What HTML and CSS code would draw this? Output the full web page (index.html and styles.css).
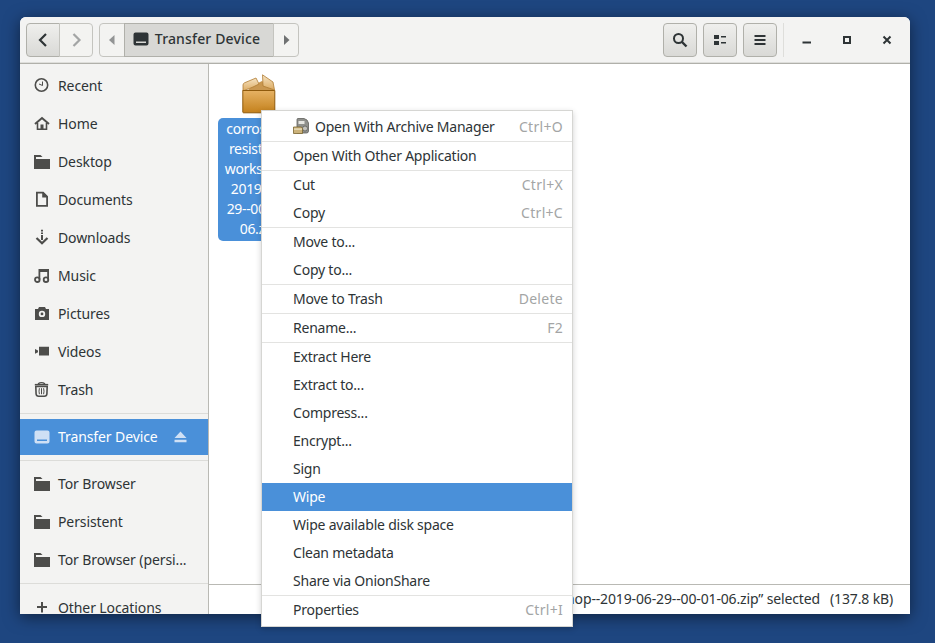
FILE: index.html
```html
<!DOCTYPE html>
<html lang="en">
<head>
  <meta charset="UTF-8">
  <title>Transfer Device</title>
  <link rel="stylesheet" href="styles.css">
</head>
<body>
  <main class="window">
    <header class="toolbar">
      <div class="linked">
        <button class="btn raised nav"><svg width="16" height="16" viewBox="0 0 16 16"><path d="M11 2 5 8l6 6" fill="none" stroke="#2e3436" stroke-width="2.200"/></svg></button>
        <button class="btn nav"><svg width="16" height="16" viewBox="0 0 16 16"><path d="m5.500 2 6 6-6 6" fill="none" stroke="#a3a5a5" stroke-width="2.200"/></svg></button>
      </div>
      <div class="linked pathbar">
        <button class="btn arrow"><svg width="8" height="12" viewBox="0 0 8 12"><path d="M6.500 1v10L1 6z" fill="#929494"/></svg></button>
        <button class="btn crumb">
          <svg width="16" height="16" viewBox="0 0 16 16"><path d="M2.500 1.500h11a2 2 0 0 1 2 2v9a2 2 0 0 1-2 2h-11a2 2 0 0 1-2-2v-9a2 2 0 0 1 2-2zM3 10.500V12h10v-1.500z" fill="#2e3436" fill-rule="evenodd"/></svg>
          Transfer Device
        </button>
        <button class="btn arrow"><svg width="8" height="12" viewBox="0 0 8 12"><path d="M2 1v10l5.500-5z" fill="#6f7172"/></svg></button>
      </div>
      <div class="spacer"></div>
      <button class="btn raised tool"><svg width="16" height="16" viewBox="0 0 16 16"><circle cx="6.500" cy="6.500" r="4.500" fill="none" stroke="#2e3436" stroke-width="2"/><path d="m10 10 4.500 4.500" stroke="#2e3436" stroke-width="2.400"/></svg></button>
      <button class="btn raised tool"><svg width="14" height="12" viewBox="0 0 14 12"><path d="M1 1h5v4H1zM1 7h5v4H1zM8 2h5v1.500H8zM8 8h5v1.500H8z" fill="#2e3436"/></svg></button>
      <button class="btn raised tool"><svg width="12" height="12" viewBox="0 0 12 12"><path d="M.5 1h11v2H.5zM.5 5h11v2H.5zM.5 9h11v2H.5z" fill="#2e3436"/></svg></button>
      <div class="divider"></div>
      <div class="winctl"><svg width="10" height="10" viewBox="0 0 10 10"><path d="M.5 6.500h8.500v2H.5z" fill="#2e3436"/></svg></div>
      <div class="winctl"><svg width="10" height="10" viewBox="0 0 10 10"><path d="M1 1h8v8H1zM3 3v4h4V3z" fill="#2e3436" fill-rule="evenodd"/></svg></div>
      <div class="winctl"><svg width="10" height="10" viewBox="0 0 10 10"><path d="m1.500 1.500 7 7M8.500 1.500l-7 7" stroke="#2e3436" stroke-width="2"/></svg></div>
    </header>

    <div class="body">
      <nav class="sidebar">
        <a class="place"><svg viewBox="0 0 16 16"><circle cx="7.500" cy="8" r="6.200" fill="none" stroke="#4d4d4b" stroke-width="1.600"/><path d="M8.500 4.500v4L5 7" fill="none" stroke="#4d4d4b"/></svg>Recent</a>
        <a class="place"><svg viewBox="0 0 16 16"><path d="M1 9 8 3l7 6" fill="none" stroke="#4d4d4b" stroke-width="2"/><path d="M3.500 8v6.200h9V8" fill="none" stroke="#4d4d4b" stroke-width="1.600"/><path d="M6.500 9.500h3v5h-3z" fill="#4d4d4b"/></svg>Home</a>
        <a class="place"><svg viewBox="0 0 16 16"><path d="M0 2h6.500l2 2H2v2h14v10.500H0z" fill="#4d4d4b"/></svg>Desktop</a>
        <a class="place"><svg viewBox="0 0 16 16"><path d="M2 .7h7.500L14 5.200v10.500H2zM3.800 2.500v11.400h8.400V6.500h-4v-4z" fill="#4d4d4b" fill-rule="evenodd"/></svg>Documents</a>
        <a class="place"><svg viewBox="0 0 16 16"><path d="M7 .7h2v1.800H7zM7 3.500h2V5H7zM7 6h2v5H7z" fill="#4d4d4b"/><path d="m2.500 9 5.500 5.300L13.500 9" fill="none" stroke="#4d4d4b" stroke-width="2.200"/></svg>Downloads</a>
        <a class="place"><svg viewBox="0 0 16 16"><path d="M4.500 2H15v10.500h-1.800V5H6.300v7.500H4.500z" fill="#4d4d4b"/><circle cx="3.300" cy="12.700" r="2.300" fill="none" stroke="#4d4d4b" stroke-width="1.800"/><circle cx="12" cy="12.700" r="2.300" fill="none" stroke="#4d4d4b" stroke-width="1.800"/></svg>Music</a>
        <a class="place"><svg viewBox="0 0 16 16"><path d="M5 2h6l1 2h3v11H1V4h3zM8 5.700a3.200 3.200 0 1 0 0 6.400 3.200 3.200 0 0 0 0-6.400zM8 7.500a1.400 1.400 0 1 1 0 2.800 1.400 1.400 0 0 1 0-2.800z" fill="#4d4d4b" fill-rule="evenodd"/></svg>Pictures</a>
        <a class="place"><svg viewBox="0 0 16 16"><path d="M5 3.700h10v8.800H5zM1 6l3 1.500v1.800L1 10.800z" fill="#4d4d4b"/></svg>Videos</a>
        <a class="place"><svg viewBox="0 0 16 16"><path d="M.8 3.700h13.400" fill="none" stroke="#4d4d4b" stroke-width="1.600"/><path d="M4 2.800Q7.500.4 11 2.800" fill="none" stroke="#4d4d4b" stroke-width="1.400"/><path d="M1.800 5.500h11.400l-.3 7.500q-.2 2.200-2.500 2.200H4.600q-2.300 0-2.500-2.200z" fill="none" stroke="#4d4d4b" stroke-width="1.600"/><path d="M7.500 7.200v6M5.400 7.200q-.8 3 0 6M9.600 7.200q.8 3 0 6" fill="none" stroke="#4d4d4b"/></svg>Trash</a>
        <hr class="rule rule-top">
        <a class="place current"><svg viewBox="0 0 16 16"><path d="M2.500 1.500h11a2 2 0 0 1 2 2v9a2 2 0 0 1-2 2h-11a2 2 0 0 1-2-2v-9a2 2 0 0 1 2-2zM3 10.500V12h10v-1.500z" fill="#cfe0f5" fill-rule="evenodd"/></svg>Transfer Device<svg class="eject" viewBox="0 0 13 12"><path d="M6.500 .5 12.500 7H.5zM.5 8.800h12v2.500H.5z" fill="#cfe0f5"/></svg></a>
        <hr class="rule rule-bottom">
        <a class="place"><svg viewBox="0 0 16 16"><path d="M0 2h6.500l2 2H2v2h14v10.500H0z" fill="#4d4d4b"/></svg>Tor Browser</a>
        <a class="place"><svg viewBox="0 0 16 16"><path d="M0 2h6.500l2 2H2v2h14v10.500H0z" fill="#4d4d4b"/></svg>Persistent</a>
        <a class="place"><svg viewBox="0 0 16 16"><path d="M0 2h6.500l2 2H2v2h14v10.500H0z" fill="#4d4d4b"/></svg>Tor Browser (persi...</a>
        <hr class="rule rule-last">
        <a class="place"><svg viewBox="0 0 16 16"><path d="M7 3h2v4h4v2H9v4.500H7V9H3V7h4z" fill="#4d4d4b"/></svg>Other Locations</a>
      </nav>

      <section class="files">
        <div class="grid">
          <div class="file">
            <svg class="box" width="34" height="40" viewBox="0 0 34 40">
              <defs>
                <linearGradient id="boxface" x1="0" y1="0" x2="0" y2="1"><stop offset="0" stop-color="#e6b264"/><stop offset="1" stop-color="#c4811c"/></linearGradient>
                <linearGradient id="boxlid" x1="0" y1="0" x2="0" y2="1"><stop offset="0" stop-color="#f6e3c2"/><stop offset="1" stop-color="#dcab62"/></linearGradient>
              </defs>
              <path d="M12 11 20 7l12 9H6z" fill="#c99750"/>
              <path d="M1 17V11q0-1.500 1.500-2.200L14 4l3 6-6 3-10 4z" fill="url(#boxlid)" stroke="#b07c34" stroke-width=".8"/>
              <path d="M20.500 .8 31 8l1.500 8-11.500-4z" fill="url(#boxlid)" stroke="#b07c34" stroke-width=".8"/>
              <path d="M.8 16.500h32v21.500a.8.8 0 0 1-.8.8H1.600a.8.8 0 0 1-.8-.8z" fill="url(#boxface)" stroke="#8f5a0c"/>
            </svg>
            <div class="file-name">corrosion-<br>resistant-<br>workshop-<br>2019-06-<br>29--00-01-<br>06.zip</div>
          </div>
        </div>
        <footer class="status">
          <span>“corrosion-resistant-workshop--2019-06-29--00-01-06.zip” selected</span>
          <span>(137.8 kB)</span>
        </footer>
      </section>
    </div>
  </main>

  <ul class="menu">
    <li class="item"><span class="item-label"><svg width="16" height="16" viewBox="0 0 16 16"><path d="M4 1.500q0-1 1-1h6l3 1.500 1.500 3v8q0 2-2 2H4z" fill="#8f908c" stroke="#5f605c" stroke-width=".8"/><path d="M5.500 3h6v3h-6z" fill="#e6e6e2"/><circle cx="12" cy="10.500" r="2.500" fill="#c2c2bd" stroke="#5f605c" stroke-width=".8"/><path d="M.5 9h8l1 1.500v5H.5z" fill="#cbb27a" stroke="#7a6430" stroke-width=".8"/><path d="M1 10.500h8v1.200H1z" fill="#eee5c8"/></svg>Open With Archive Manager</span><kbd>Ctrl+O</kbd></li>
    <li class="sep"></li>
    <li class="item"><span class="item-label">Open With Other Application</span></li>
    <li class="sep"></li>
    <li class="item"><span class="item-label">Cut</span><kbd>Ctrl+X</kbd></li>
    <li class="item"><span class="item-label">Copy</span><kbd>Ctrl+C</kbd></li>
    <li class="sep"></li>
    <li class="item"><span class="item-label">Move to...</span></li>
    <li class="item"><span class="item-label">Copy to...</span></li>
    <li class="sep"></li>
    <li class="item"><span class="item-label">Move to Trash</span><kbd>Delete</kbd></li>
    <li class="sep"></li>
    <li class="item"><span class="item-label">Rename...</span><kbd>F2</kbd></li>
    <li class="sep"></li>
    <li class="item"><span class="item-label">Extract Here</span></li>
    <li class="item"><span class="item-label">Extract to...</span></li>
    <li class="item"><span class="item-label">Compress...</span></li>
    <li class="item"><span class="item-label">Encrypt...</span></li>
    <li class="item"><span class="item-label">Sign</span></li>
    <li class="item active"><span class="item-label">Wipe</span></li>
    <li class="item"><span class="item-label">Wipe available disk space</span></li>
    <li class="item"><span class="item-label">Clean metadata</span></li>
    <li class="item"><span class="item-label">Share via OnionShare</span></li>
    <li class="sep"></li>
    <li class="item"><span class="item-label">Properties</span><kbd>Ctrl+I</kbd></li>
  </ul>
</body>
</html>
```

FILE: styles.css
```css
* {
  box-sizing: border-box;
}

body {
  margin: 0;
  height: 643px;
  overflow: hidden;
  position: relative;
  background: #1e4680;
  font-family: "Noto Sans", sans-serif;
  font-size: 14px;
  letter-spacing: -.1px;
  color: #2e3436;
}

.window {
  position: absolute;
  left: 20px;
  top: 17px;
  width: 890px;
  height: 597px;
  display: flex;
  flex-direction: column;
  overflow: hidden;
  border-radius: 6px 6px 0 0;
  background: #fff;
}

body::before {
  content: '';
  position: absolute;
  left: 20px;
  top: 17px;
  width: 890px;
  height: 597px;
  border-radius: 6px 6px 0 0;
  box-shadow: 0 3px 16px rgba(0, 0, 0, .5);
}

/* toolbar */
.toolbar {
  flex: none;
  height: 47px;
  display: flex;
  align-items: center;
  gap: 7px;
  padding: 0 3px 1px 6px;
  background: #f3f3f2;
  border-bottom: 1px solid #b0b0aa;
  box-shadow: inset 0 -1px 0 #dededb;
}

.btn {
  height: 34px;
  display: flex;
  align-items: center;
  justify-content: center;
  gap: 6px;
  padding: 0;
  font: inherit;
  letter-spacing: inherit;
  color: #2e3436;
  background: #f3f3f1;
  border: 1px solid #c4c4bf;
  border-radius: 4px;
}

.btn.raised {
  background: linear-gradient(#efefed, #d9d9d6);
  border-color: #b0b0aa;
}

.linked {
  display: flex;
}

.linked .btn {
  border-radius: 0;
  margin-left: -1px;
}

.linked .btn:first-child {
  border-radius: 4px 0 0 4px;
  margin-left: 0;
}

.linked .btn:last-child {
  border-radius: 0 4px 4px 0;
}

.pathbar {
  margin-left: -1px;
}

.nav {
  width: 34px;
}

.arrow {
  width: 26px;
}

.crumb {
  width: 150px;
  padding: 0 5px 2px 0;
  background: #d8d8d5;
  border-color: #b0b0aa;
  font-weight: 500;
  letter-spacing: .15px;
}

.spacer {
  flex: 1;
}

.tool {
  width: 34px;
  margin-left: -1px;
}

.divider {
  width: 1px;
  height: 34px;
  margin-left: -1px;
  margin-right: -4px;
  background: #dededb;
}

.winctl {
  width: 40px;
  display: flex;
  justify-content: center;
  margin-right: -7px;
}

.winctl:last-child {
  margin-right: 0;
}

/* main area */
.body {
  flex: 1;
  min-height: 0;
  display: flex;
}

.sidebar {
  flex: none;
  width: 189px;
  padding-top: 2px;
  background: #f3f3f2;
  border-right: 1px solid #b9b9b4;
}

.place {
  height: 38px;
  display: flex;
  align-items: center;
  gap: 8px;
  padding-left: 14px;
  color: #2e3436;
}

.place svg {
  width: 16px;
  height: 16px;
  flex: none;
}

.place.current {
  height: 36px;
  padding-bottom: 1px;
  background: #4a90d9;
  color: #fff;
}

.place .eject {
  width: 13px;
  height: 12px;
  margin-left: 8px;
}

.rule {
  height: 1px;
  margin: 0;
  border: 0;
  background: #dcdcd9;
}

.rule-top {
  margin: 5px 0;
}

.rule-bottom {
  margin: 5px 0 3px;
}

.rule-last {
  margin: 5px 0 4px;
}

.files {
  flex: 1;
  min-width: 0;
  display: flex;
  flex-direction: column;
}

.grid {
  flex: 1;
  padding: 10px 0 0 9px;
}

.file {
  width: 82px;
  display: flex;
  flex-direction: column;
  align-items: center;
  gap: 4px;
}

.box {
  display: block;
}

.file-name {
  width: 100%;
  padding: 1px 2px 2px 0;
  background: #4a90d9;
  color: #fff;
  text-align: center;
  line-height: 20px;
  letter-spacing: -.35px;
  border-radius: 5px;
}

.status {
  flex: none;
  height: 30px;
  display: flex;
  align-items: center;
  justify-content: flex-end;
  gap: 10px;
  padding: 0 17px 2px 0;
  white-space: nowrap;
  letter-spacing: -.14px;
  background: #fff;
  border-top: 1px solid #b9b9b4;
}

/* context menu */
.menu {
  position: absolute;
  left: 261px;
  top: 110px;
  width: 312px;
  height: 517px;
  margin: 0;
  padding: 2px 0;
  list-style: none;
  letter-spacing: -.22px;
  background: #fff;
  border: 1px solid #d6d6d3;
  box-shadow: 0 2px 6px rgba(0, 0, 0, .18);
}

.item {
  height: 28px;
  display: flex;
  align-items: center;
  justify-content: space-between;
  padding: 0 9px 2px 31px;
}

.item-label {
  display: flex;
  align-items: center;
  gap: 6px;
}

.item kbd {
  font: inherit;
  letter-spacing: .3px;
  color: #a3a5a5;
}

.item.active {
  background: #4a90d9;
  color: #fff;
}

.sep {
  height: 1px;
  background: #e3e3e1;
}
```
